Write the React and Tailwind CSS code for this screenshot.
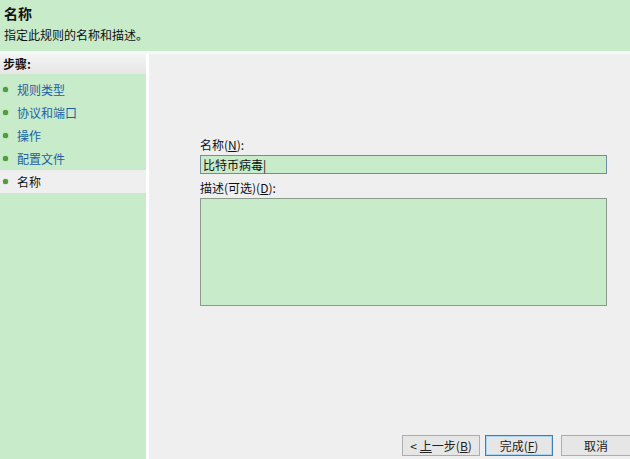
const STEPS = [
  { label: '规则类型' },
  { label: '协议和端口' },
  { label: '操作' },
  { label: '配置文件' },
  { label: '名称', active: true },
]

function Dot() {
  return <span className="inline-block w-[5px] h-[5px] rounded-full bg-[#4fa03a] shadow-[0_0_1px_#2f7a22] shrink-0" />
}

function Btn({ children, primary, className }) {
  return (
    <button
      className={`h-[21px] border text-[12px] text-[#222] bg-[#e6e6e6] flex items-center justify-center shrink-0 ${primary ? 'border-[#3c7fb1] shadow-[inset_0_0_0_1px_#a9d6f3]' : 'border-[#adadad]'} ${className}`}
    >
      {children}
    </button>
  )
}

export default function App() {
  return (
    <div className="w-[630px] h-[459px] flex flex-col bg-white overflow-hidden text-[12px] text-[#111]" style={{ fontFamily: '"Noto Sans CJK SC", "Noto Sans", sans-serif' }}>
      <div className="h-[51px] bg-[#c8ebca] px-[4px] pt-[2px] shrink-0">
        <div className="text-[14px] font-bold leading-[22px]">名称</div>
        <div className="text-[12px] leading-[18px] mt-[2px]">指定此规则的名称和描述。</div>
      </div>
      <div className="h-[3px] bg-[#f4fbf4] shrink-0" />
      <div className="flex flex-1 min-h-0">
        <div className="w-[148px] bg-[#c8ebca] flex flex-col">
          <div className="h-[20px] bg-gradient-to-b from-[#f4f4f4] to-[#e6e6e6] px-[3px] flex items-center font-bold text-[12px] leading-none">步骤:</div>
          <div className="mt-[4px] flex flex-col">
            {STEPS.map(s => (
              <div key={s.label} className={`h-[23px] flex items-center gap-[9px] pl-[3px] ${s.active ? 'bg-[#efefef] text-[#111]' : 'text-[#1c5fa5]'}`}>
                <Dot />
                <span className="leading-none">{s.label}</span>
              </div>
            ))}
          </div>
        </div>
        <div className="w-[3px] bg-white" />
        <div className="flex-1 bg-[#efefef] flex flex-col pl-[51px] pr-[23px]">
          <div className="mt-[83px] leading-[16px]">名称(<u>N</u>):</div>
          <div className="mt-[2px] h-[19px] border border-[#6f8ea3] bg-[#c8ebca] flex items-center px-[2px] leading-none">比特币病毒|</div>
          <div className="mt-[6px] leading-[16px]">描述(可选)(<u>D</u>):</div>
          <div className="mt-[2px] h-[108px] border border-[#8a9a8c] bg-[#c8ebca]" />
          <div className="mt-auto mb-[3px] flex -mr-[24px] pl-[202px]">
            <Btn className="w-[78px]">&lt; <u className="ml-[3px]">上</u>一步(<u>B</u>)</Btn>
            <Btn primary className="w-[68px] ml-[5px]">完成(<u>F</u>)</Btn>
            <Btn className="w-[70px] ml-[8px]">取消</Btn>
          </div>
        </div>
      </div>
    </div>
  )
}
